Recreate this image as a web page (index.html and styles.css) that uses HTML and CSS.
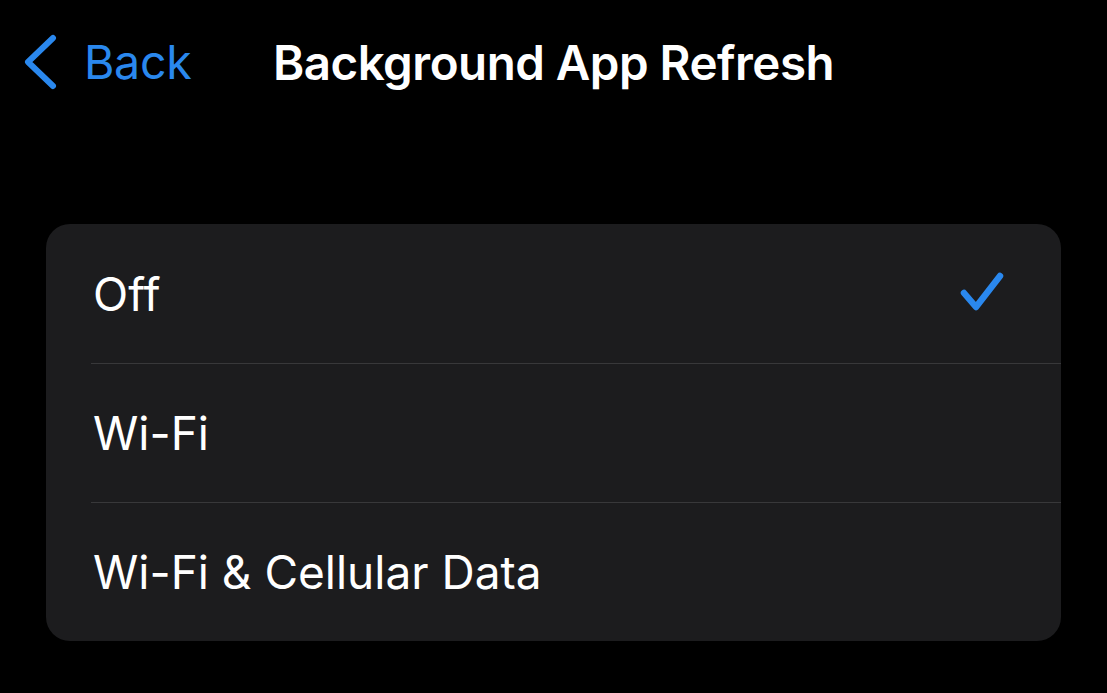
FILE: index.html
```html
<!DOCTYPE html>
<html>
<head>
<meta charset="utf-8">
<link rel="stylesheet" href="styles.css">
</head>
<body>
<header class="nav">
  <a class="back">
    <svg class="chev" width="40" height="56" viewBox="0 0 40 56"><polyline points="30,4 5,28 30,52" fill="none" stroke="#2a88ee" stroke-width="6" stroke-linecap="round" stroke-linejoin="round"/></svg>
    <span>Back</span>
  </a>
  <h1 class="title">Background App Refresh</h1>
  <div></div>
</header>
<main>
  <ul class="card">
    <li class="row"><span>Off</span>
      <svg class="check" width="50" height="50" viewBox="0 0 50 50"><polyline points="5,24 17,38 41,7" fill="none" stroke="#2a88ee" stroke-width="6.5" stroke-linecap="round" stroke-linejoin="round"/></svg>
    </li>
    <li class="row"><span>Wi-Fi</span></li>
    <li class="row"><span>Wi-Fi &amp; Cellular Data</span></li>
  </ul>
</main>
</body>
</html>
```
FILE: styles.css
```css
html, body { margin: 0; padding: 0; background: #000; }
body {
  width: 1107px; height: 693px; overflow: hidden;
  font-family: Inter, "Noto Sans", sans-serif;
  color: #fff;
}
.nav {
  display: grid;
  grid-template-columns: 1fr auto 1fr;
  align-items: center;
  height: 124px;
}
.back {
  display: flex; align-items: center; gap: 21px;
  padding-left: 23px;
  color: #2a88ee;
  font-size: 46.5px;
  letter-spacing: -0.3px;
}
.chev { display: block; }
.title {
  margin: 0;
  font-size: 47.5px;
  font-weight: 600;
  letter-spacing: -0.5px;
}
main { padding: 100px 46px 0; }
.card {
  list-style: none; margin: 0; padding: 0;
  background: #1c1c1e;
  border-radius: 24px;
  overflow: hidden;
}
.row {
  position: relative;
  display: flex; align-items: center; justify-content: space-between;
  height: 139px;
  padding: 0 52px 0 47px;
  font-size: 46px;
  box-sizing: border-box;
}
.row + .row { border-top: 1px solid transparent; }
.row + .row::before {
  content: ""; position: absolute; left: 45px; right: 0; top: -1px;
  height: 1px; background: #38383a;
}
.check { display: block; }
```
